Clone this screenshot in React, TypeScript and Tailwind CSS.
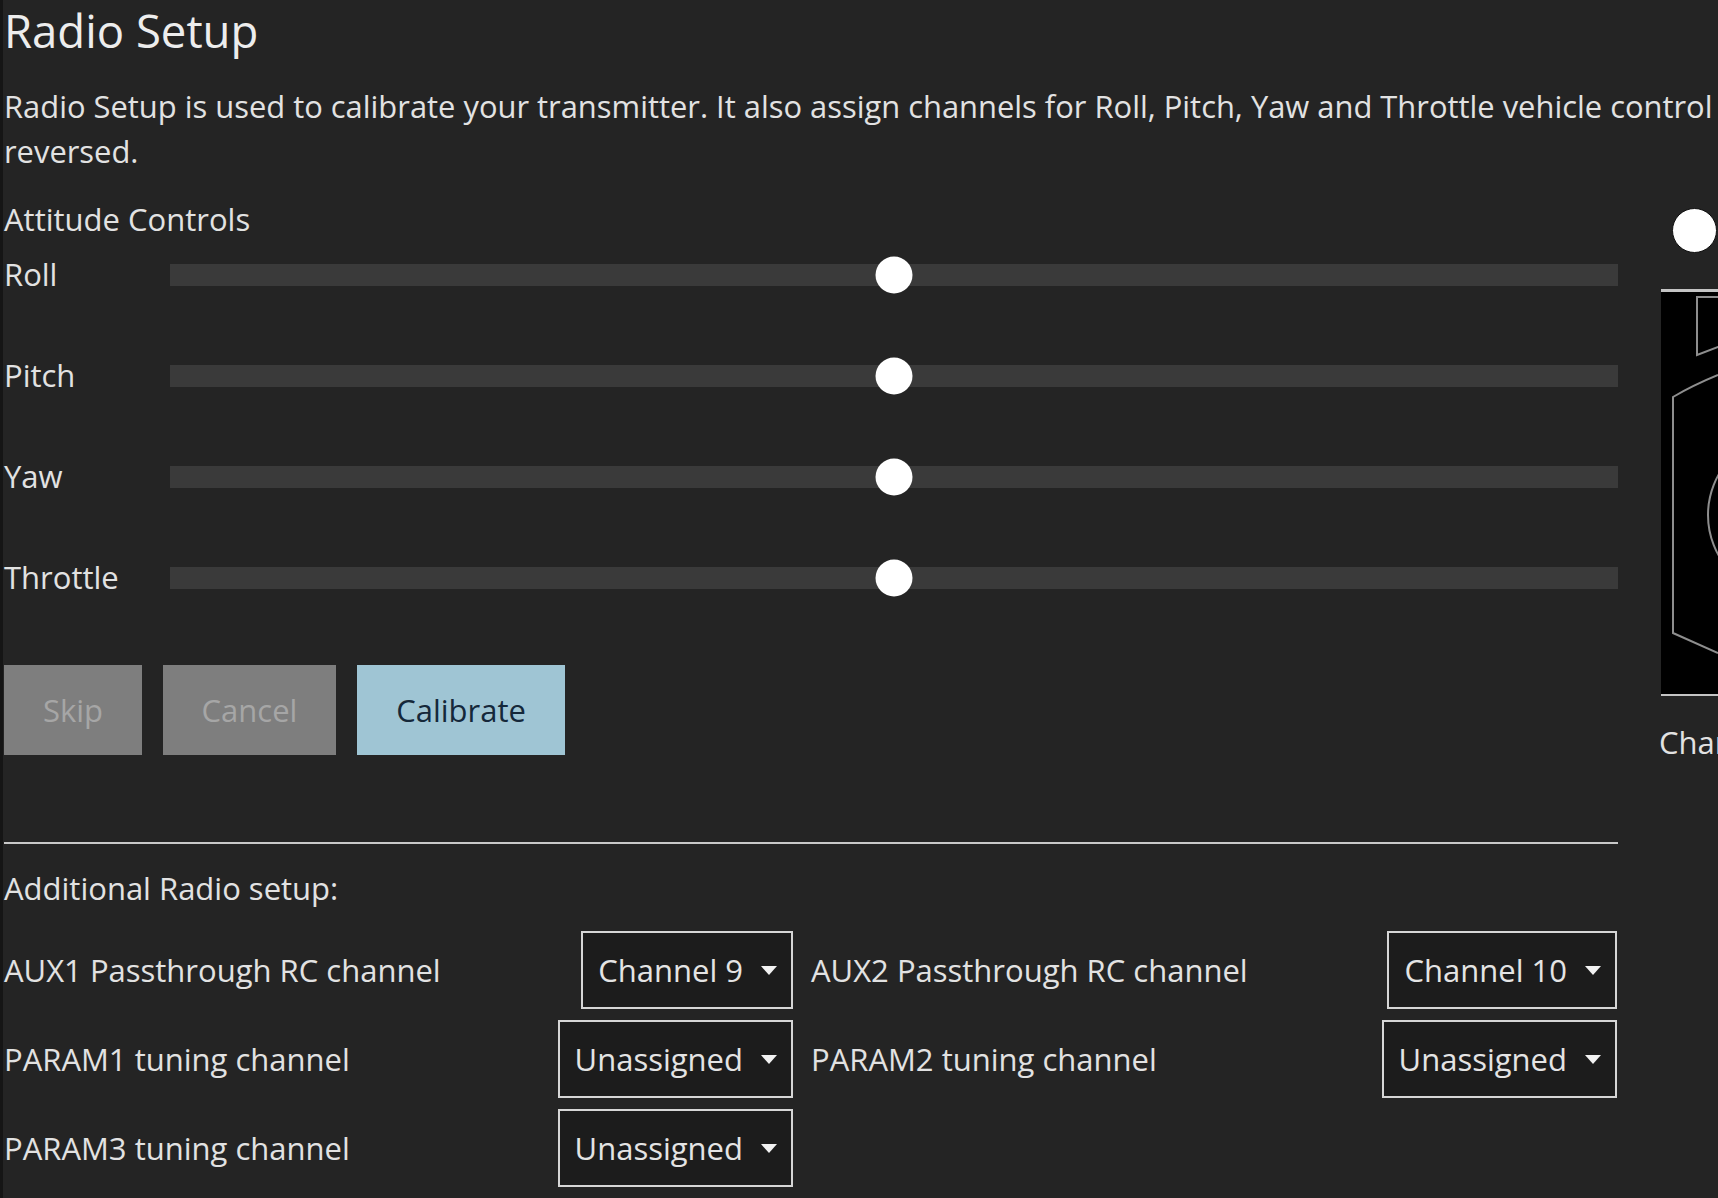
import React from "react";

const axes = ["Roll", "Pitch", "Yaw", "Throttle"];

function AxisRow({ label }: { label: string }) {
  return (
    <div className="flex h-[45px] items-center">
      <span className="w-[166px] shrink-0">{label}</span>
      <div className="relative h-[22px] flex-1 bg-[#3a3a3a]">
        <div className="absolute left-1/2 top-1/2 h-[37px] w-[37px] -translate-x-1/2 -translate-y-1/2 rounded-full bg-white" />
      </div>
    </div>
  );
}

function ChannelSelect({ value }: { value: string }) {
  return (
    <div className="flex h-[78px] items-center gap-[18px] border-2 border-[#d6d6d6] bg-[#1c1c1c] pl-[15px] pr-[14px] text-[#e4e4e4]">
      <span>{value}</span>
      <svg width="16" height="9" viewBox="0 0 16 9">
        <path d="M0 0h16L8 9z" fill="#f2f2f2" />
      </svg>
    </div>
  );
}

function SetupCell({ label, value, width }: { label: string; value: string; width: string }) {
  return (
    <div className={`flex items-center justify-between ${width}`}>
      <span>{label}</span>
      <ChannelSelect value={value} />
    </div>
  );
}

export default function App() {
  return (
    <div className="h-[1198px] w-[1718px] overflow-hidden border-l-[3px] border-[#151515] bg-[#242424] pl-[1px] font-['Open_Sans',sans-serif] text-[31px] leading-[45px] text-[#e2e2e2]">
      <h1 className="text-[45.5px] leading-[61px] text-[#ededed]">Radio Setup</h1>
      <p className="mt-[23px] whitespace-nowrap text-[30.9px]">
        Radio Setup is used to calibrate your transmitter. It also assign channels for Roll, Pitch, Yaw and Throttle vehicle control and determine whether they are
        <br />
        reversed.
      </p>

      <div className="flex gap-[43px]">
        {/* left column: attitude sliders + extra setup */}
        <div className="w-[1614px] shrink-0">
          <p className="mt-[23px]">Attitude Controls</p>
          <div className="mt-[10px] flex flex-col gap-[56px]">
            {axes.map((a) => (
              <AxisRow key={a} label={a} />
            ))}
          </div>

          <div className="mt-[65px] flex gap-[21px]">
            <button className="h-[90px] w-[138px] bg-[#7e7e7e] text-[#a6a6a6]">Skip</button>
            <button className="h-[90px] w-[173px] bg-[#7e7e7e] text-[#a6a6a6]">Cancel</button>
            <button className="h-[90px] w-[208px] bg-[#9fc5d4] text-[#15283a]">Calibrate</button>
          </div>

          <div className="mt-[87px] h-[2px] bg-[#c9c9c9]" />

          <p className="mt-[22px]">Additional Radio setup:</p>

          <div className="mt-[20px] flex flex-col gap-[11px]">
            <div className="flex gap-[18px]">
              <SetupCell label="AUX1 Passthrough RC channel" value="Channel 9" width="w-[789px]" />
              <SetupCell label="AUX2 Passthrough RC channel" value="Channel 10" width="w-[806px]" />
            </div>
            <div className="flex gap-[18px]">
              <SetupCell label="PARAM1 tuning channel" value="Unassigned" width="w-[789px]" />
              <SetupCell label="PARAM2 tuning channel" value="Unassigned" width="w-[806px]" />
            </div>
            <div className="flex gap-[18px]">
              <SetupCell label="PARAM3 tuning channel" value="Unassigned" width="w-[789px]" />
            </div>
          </div>
        </div>

        {/* right column: transmitter monitor, cut by the window edge */}
        <div className="w-[420px] shrink-0">
          <div className="ml-[11px] mt-[34px] h-[45px] w-[45px] rounded-full border border-[#111] bg-white" />
          <div className="mt-[36px] h-[3px] bg-[#c4c4c4]" />
          <div className="h-[402px] bg-black">
            <svg width="420" height="402" viewBox="0 0 420 402" fill="none" stroke="#8e8e8e" strokeWidth="2">
              <path d="M36 5H160V55L57 55L36 63Z" />
              <path d="M57 83C40 90 24 98 12 105V341L57 361" />
              <circle cx="129" cy="223" r="82" />
            </svg>
          </div>
          <div className="h-[2px] bg-[#c4c4c4]" />
          <p className="ml-[-2px] mt-[24px] whitespace-nowrap">Channel Monitor</p>
        </div>
      </div>
    </div>
  );
}
